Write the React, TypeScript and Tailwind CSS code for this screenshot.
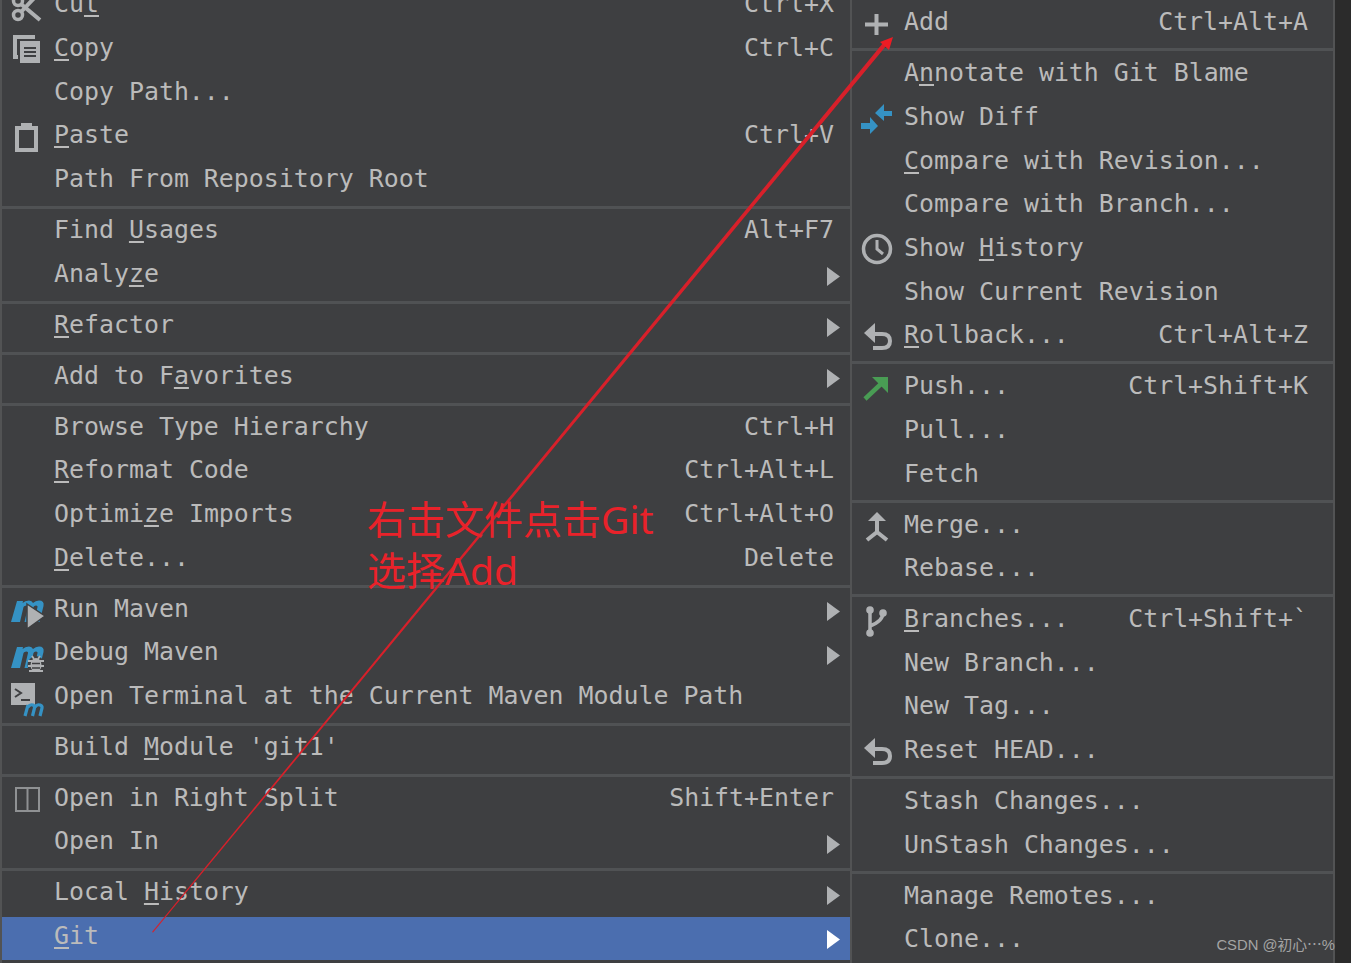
import type { ReactNode } from 'react';

type Row = { label: string; keys?: string; arrow?: boolean; icon?: ReactNode; active?: boolean };

const gray = '#afb1b3';
const blue = '#3592c4';
const panel = '#3e3f41';

function Svg({ children }: { children: ReactNode }) {
  return (
    <svg width="40" height="40" viewBox="0 0 40 40" className="shrink-0 ml-2 overflow-visible" fill="none">
      {children}
    </svg>
  );
}

const CutIcon = (
  <Svg>
    <circle cx="8" cy="28" r="4.5" stroke={gray} strokeWidth="3.5" />
    <circle cx="8" cy="14" r="4.5" stroke={gray} strokeWidth="3.5" />
    <path d="M11 25 L28 7 M11 17 L30 33" stroke={gray} strokeWidth="4" />
  </Svg>
);

const CopyIcon = (
  <Svg>
    <path d="M8 27 H5 V7 H23 V9" stroke={gray} strokeWidth="4" />
    <rect x="10" y="11" width="20" height="22" fill={gray} />
    <path d="M14 18 H26 M14 22 H26 M14 26 H26" stroke={panel} strokeWidth="2" />
  </Svg>
);

const PasteIcon = (
  <Svg>
    <rect x="7" y="10" width="19" height="22" stroke={gray} strokeWidth="4" />
    <rect x="11" y="5" width="11" height="7" fill={gray} />
  </Svg>
);

const mPath =
  'M7 10 H13 L12.6 12 Q15 9.5 19 9.5 Q22 9.5 23 12 Q25.5 9.5 29 9.5 Q34.5 9.5 33.5 15 L29.5 31 H24 L27.5 16 Q28 14.5 26 14.5 Q24 14.5 23.5 16 L20 31 H14.5 L18 16 Q18.5 14.5 16.5 14.5 Q14 14.5 13.5 16 L10 31 H1 Z';

const RunMavenIcon = (
  <Svg>
    <path d={mPath} fill={blue} />
    <polygon points="17,13 35,25 17,38" fill={gray} stroke={panel} strokeWidth="1.5" />
  </Svg>
);

const DebugMavenIcon = (
  <Svg>
    <g transform="translate(0 2)">
      <path d={mPath} fill={blue} />
    </g>
    <ellipse cx="26" cy="30" rx="8.5" ry="9" fill={panel} />
    <ellipse cx="26" cy="30" rx="5.5" ry="7" fill={gray} />
    <path d="M18 26 H34 M18 31 H34 M19 36 H33 M22 21 L24 24 M30 21 L28 24" stroke={gray} strokeWidth="1.8" />
    <path d="M22 28.5 H30 M22 33 H30" stroke={panel} strokeWidth="1.5" />
  </Svg>
);

const TerminalIcon = (
  <Svg>
    <rect x="1" y="5" width="24" height="22" fill={gray} />
    <path d="M5 11 L11 15 L5 19" stroke={panel} strokeWidth="2" />
    <path d="M11 22 H20" stroke={panel} strokeWidth="2" />
    <path d="M15 38 L18 27 M18 29 Q20 26 23 27 Q25 28 24.5 30 L22.5 38 M25 29 Q27 26 30 27 Q32.5 28 32 30 L30 38" stroke={blue} strokeWidth="3.2" />
  </Svg>
);

const SplitIcon = (
  <Svg>
    <rect x="6" y="8" width="23" height="23" stroke="#8f9193" strokeWidth="2" />
    <path d="M17.5 8 V31" stroke="#8f9193" strokeWidth="2" />
  </Svg>
);

const PlusIcon = (
  <Svg>
    <path d="M5 20.5 H28 M16.5 10 V31" stroke={gray} strokeWidth="4" />
  </Svg>
);

const DiffIcon = (
  <Svg>
    <polygon points="15,15 24,6 24,13 32,13 32,18 24,18 24,23" fill={blue} />
    <polygon points="18,28 10,19 10,25 1,25 1,31 10,31 10,36" fill={blue} />
  </Svg>
);

const ClockIcon = (
  <Svg>
    <circle cx="17" cy="20" r="13.5" stroke={gray} strokeWidth="3.5" />
    <path d="M17 11 V20 L23 25" stroke={gray} strokeWidth="3" />
  </Svg>
);

const RollbackIcon = (
  <Svg>
    <path d="M9 17 H22 Q30 17 30 24 Q30 31 22 31 H13" stroke={gray} strokeWidth="4" />
    <polygon points="4,16 15,6 15,26" fill={gray} />
  </Svg>
);

const PushIcon = (
  <Svg>
    <path d="M5 31 L23 14" stroke="#499c54" strokeWidth="4.5" />
    <polygon points="12,9 28,9 28,25" fill="#499c54" />
  </Svg>
);

const MergeIcon = (
  <Svg>
    <polygon points="17,6 26,15 8,15" fill={gray} />
    <path d="M17 12 V26 L7 34 M17 26 L27 34" stroke={gray} strokeWidth="4" />
  </Svg>
);

const BranchIcon = (
  <Svg>
    <path d="M10 9 V32 M23 12 Q23 20 10 25" stroke={gray} strokeWidth="3.5" />
    <circle cx="10" cy="9" r="3.8" fill={gray} />
    <circle cx="10" cy="32" r="3.8" fill={gray} />
    <circle cx="23" cy="12" r="3.8" fill={gray} />
  </Svg>
);

const leftGroups: Row[][] = [
  [
    { label: 'Cu_t', keys: 'Ctrl+X', icon: CutIcon },
    { label: '_Copy', keys: 'Ctrl+C', icon: CopyIcon },
    { label: 'Copy Path...' },
    { label: '_Paste', keys: 'Ctrl+V', icon: PasteIcon },
    { label: 'Path From Repository Root' },
  ],
  [{ label: 'Find _Usages', keys: 'Alt+F7' }, { label: 'Analy_ze', arrow: true }],
  [{ label: '_Refactor', arrow: true }],
  [{ label: 'Add to F_avorites', arrow: true }],
  [
    { label: 'Browse Type Hierarchy', keys: 'Ctrl+H' },
    { label: '_Reformat Code', keys: 'Ctrl+Alt+L' },
    { label: 'Optimi_ze Imports', keys: 'Ctrl+Alt+O' },
    { label: '_Delete...', keys: 'Delete' },
  ],
  [
    { label: 'Run Maven', arrow: true, icon: RunMavenIcon },
    { label: 'Debug Maven', arrow: true, icon: DebugMavenIcon },
    { label: 'Open Terminal at the Current Maven Module Path', icon: TerminalIcon },
  ],
  [{ label: "Build _Module 'git1'" }],
  [
    { label: 'Open in Right Split', keys: 'Shift+Enter', icon: SplitIcon },
    { label: 'Open In', arrow: true },
  ],
  [{ label: 'Local _History', arrow: true }, { label: '_Git', arrow: true, active: true }],
];

const rightGroups: Row[][] = [
  [{ label: 'Add', keys: 'Ctrl+Alt+A', icon: PlusIcon }],
  [
    { label: 'A_nnotate with Git Blame' },
    { label: 'Show Diff', icon: DiffIcon },
    { label: '_Compare with Revision...' },
    { label: 'Compare with Branch...' },
    { label: 'Show _History', icon: ClockIcon },
    { label: 'Show Current Revision' },
    { label: '_Rollback...', keys: 'Ctrl+Alt+Z', icon: RollbackIcon },
  ],
  [
    { label: 'Push...', keys: 'Ctrl+Shift+K', icon: PushIcon },
    { label: 'Pull...' },
    { label: 'Fetch' },
  ],
  [{ label: 'Merge...', icon: MergeIcon }, { label: 'Rebase...' }],
  [
    { label: '_Branches...', keys: 'Ctrl+Shift+`', icon: BranchIcon },
    { label: 'New Branch...' },
    { label: 'New Tag...' },
    { label: 'Reset HEAD...', icon: RollbackIcon },
  ],
  [{ label: 'Stash Changes...' }, { label: 'UnStash Changes...' }],
  [{ label: 'Manage Remotes...' }, { label: 'Clone...' }],
];

function Label({ text, pad }: { text: string; pad: string }) {
  const i = text.indexOf('_');
  if (i < 0) return <span className={`flex-1 whitespace-pre ${pad}`}>{text}</span>;
  return (
    <span className={`flex-1 whitespace-pre ${pad}`}>
      {text.slice(0, i)}
      <span className="underline decoration-[1.5px] underline-offset-[3px] [text-decoration-skip-ink:none]">{text[i + 1]}</span>
      {text.slice(i + 2)}
    </span>
  );
}

function MenuRow({ row, keysPad, textPad }: { row: Row; keysPad: string; textPad: string }) {
  return (
    <div className={`flex items-center h-[43.67px] shrink-0 text-[#bbbbbb] ${row.active ? 'bg-[#4b6eaf]' : ''}`}>
      <div className="w-[52px] h-full shrink-0 flex items-center">{row.icon}</div>
      <Label text={row.label} pad={textPad} />
      {row.keys && <span className={`whitespace-pre ${textPad} ${keysPad}`}>{row.keys}</span>}
      {row.arrow && (
        <svg width="13" height="19" viewBox="0 0 13 19" className="mr-[10px] mt-[1px]">
          <polygon points="0,0 13,9.5 0,19" fill={row.active ? '#ffffff' : gray} />
        </svg>
      )}
    </div>
  );
}

function Separator() {
  return (
    <div className="h-[7.33px] shrink-0 flex items-center pt-[1px]">
      <div className="h-[3px] w-full bg-[#505254]" />
    </div>
  );
}

function Menu({ groups, keysPad, textPad }: { groups: Row[][]; keysPad: string; textPad: string }) {
  return (
    <>
      {groups.map((group, g) => (
        <div key={g} className="contents">
          {g > 0 && <Separator />}
          {group.map((row) => (
            <MenuRow key={row.label} row={row} keysPad={keysPad} textPad={textPad} />
          ))}
        </div>
      ))}
    </>
  );
}

export default function App() {
  return (
    <div className="relative flex w-[1351px] h-[963px] overflow-hidden bg-[#2b2b2b] font-['DejaVu_Sans_Mono',monospace] text-[24.9px] leading-[30px]">
      <div className="w-[852px] h-full shrink-0 flex flex-col bg-[#3e3f41] border-x-2 border-[#525354] overflow-hidden">
        <div className="flex flex-col -mt-[15px]">
          <Menu groups={leftGroups} keysPad="pr-[16px]" textPad="pb-[5px]" />
        </div>
      </div>
      <div className="w-[483px] h-full shrink-0 flex flex-col pt-[2px] bg-[#3e3f41] border-r-2 border-[#525354] overflow-hidden">
        <Menu groups={rightGroups} keysPad="pr-[25px]" textPad="pb-[3px]" />
      </div>

      <svg width="1351" height="963" className="absolute inset-0 pointer-events-none">
        <polygon points="152,932 153,932.6 886,46 883,43" fill="#d8202a" />
        <polygon points="893,37 880,42 889,50" fill="#ed1c24" />
      </svg>

      <div className="absolute left-[367px] top-[493px] text-[39px] leading-[51px] text-[#e9222a] font-['Noto_Sans','Noto_Sans_CJK_SC',sans-serif] whitespace-pre">
        <div>右击文件点击Git</div>
        <div>选择Add</div>
      </div>

      <div className="absolute right-[16px] top-[935px] text-[14.8px] leading-[20px] text-[#a4a4a4] font-['Liberation_Sans','Noto_Sans_CJK_SC',sans-serif] whitespace-pre">
        CSDN @初心⋯%
      </div>
    </div>
  );
}
